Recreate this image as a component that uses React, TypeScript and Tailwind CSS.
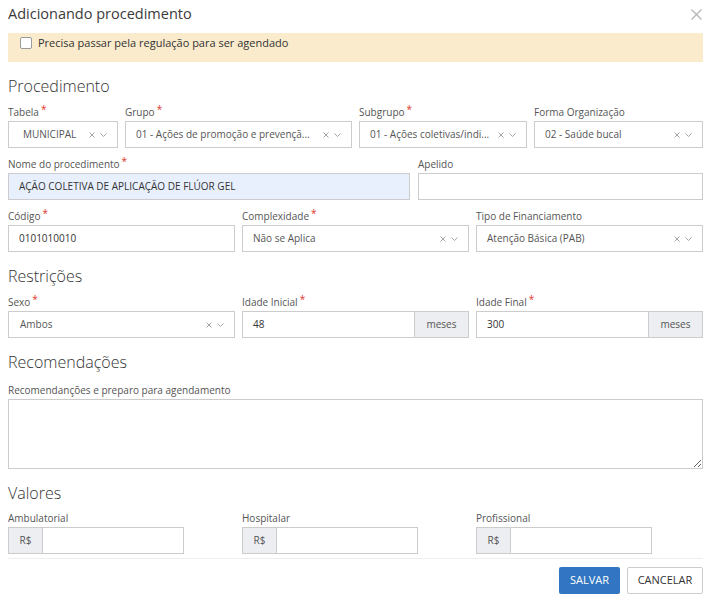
import React from 'react';

const font = "font-['Open_Sans',_sans-serif]";

function Req() {
  return <span className="ml-[2px] text-[#e0352b] text-[10px] leading-none relative -top-[3px]">*</span>;
}

function Label({ text, req }: { text: string; req?: boolean }) {
  return (
    <div className="text-[10px] leading-[14px] text-[#555] mb-[2px] whitespace-nowrap">
      {text}
      {req && <Req />}
    </div>
  );
}

function SelectIcons() {
  return (
    <div className="flex items-center gap-[5px] shrink-0">
      <svg width="6" height="6" viewBox="0 0 6 6">
        <path d="M0.5 0.5 L5.5 5.5 M5.5 0.5 L0.5 5.5" stroke="#9a9a9a" strokeWidth="0.9" fill="none" />
      </svg>
      <svg width="7" height="4" viewBox="0 0 7 4">
        <path d="M0.5 0.5 L3.5 3.5 L6.5 0.5" stroke="#9a9a9a" strokeWidth="0.9" fill="none" />
      </svg>
    </div>
  );
}

function Select({ value, pl = 'pl-[10px]' }: { value: string; pl?: string }) {
  return (
    <div className={`h-[27px] border border-[#ccc] bg-white flex items-center justify-between ${pl} pr-[10px]`}>
      <span className="whitespace-nowrap text-[10px] text-[#555]">{value}</span>
      <SelectIcons />
    </div>
  );
}

function Input({ value, bg = 'bg-white' }: { value?: string; bg?: string }) {
  return (
    <div className={`h-[27px] border border-[#ccc] ${bg} flex items-center pl-[10px] text-[10px] text-[#333]`}>
      {value}
    </div>
  );
}

function Addon({ value, addon }: { value: string; addon: string }) {
  return (
    <div className="h-[27px] border border-[#ccc] bg-white flex text-[10px]">
      <div className="flex-1 flex items-center pl-[10px] text-[#333]">{value}</div>
      <div className="w-[54px] border-l border-[#ccc] bg-[#eceef1] flex items-center justify-center text-[#555]">{addon}</div>
    </div>
  );
}

function Money() {
  return (
    <div className="w-[176px] h-[27px] border border-[#ccc] bg-white flex text-[10px]">
      <div className="w-[34px] border-r border-[#ccc] bg-[#eceef1] flex items-center justify-center text-[#555]">R$</div>
      <div className="flex-1" />
    </div>
  );
}

function Heading({ text, mb = 'mb-[7px]' }: { text: string; mb?: string }) {
  return <h3 className={`text-[16px] leading-[24px] font-light text-[#333] mt-[12px] ${mb}`}>{text}</h3>;
}

export default function App() {
  return (
    <div className={`${font} w-[710px] h-[602px] bg-white overflow-hidden pl-2 pr-[7px]`}>
      <div className="h-[33px] pt-[4px] flex justify-between items-start">
        <span className="text-[14.5px] leading-[20px] text-[#3a3a3a]">Adicionando procedimento</span>
        <svg width="11" height="11" viewBox="0 0 11 11" className="mt-[5px] mr-[1px]">
          <path d="M0.5 0.5 L10.5 10.5 M10.5 0.5 L0.5 10.5" stroke="#b5b5b5" strokeWidth="1.3" fill="none" />
        </svg>
      </div>

      <div className="h-[29px] bg-[#faebcc] flex items-start pl-[12px] pt-[3px] gap-[6px]">
        <div className="w-[12px] h-[12px] mt-[1px] border border-[#9a9a9a] rounded-[2px] bg-white" />
        <span className="text-[11px] leading-[14px] text-[#333]">Precisa passar pela regulação para ser agendado</span>
      </div>

      <Heading text="Procedimento" />
      <div className="grid grid-cols-[110px_227px_168px_1fr] gap-x-[7px]">
        <div>
          <Label text="Tabela" req />
          <Select value="MUNICIPAL" pl="pl-[14px]" />
        </div>
        <div>
          <Label text="Grupo" req />
          <Select value="01 - Ações de promoção e prevençã..." />
        </div>
        <div>
          <Label text="Subgrupo" req />
          <Select value="01 - Ações coletivas/indi..." />
        </div>
        <div>
          <Label text="Forma Organização" />
          <Select value="02 - Saúde bucal" />
        </div>
      </div>

      <div className="grid grid-cols-[402px_1fr] gap-x-[8px] mt-[9px]">
        <div>
          <Label text="Nome do procedimento" req />
          <Input value="AÇÃO COLETIVA DE APLICAÇÃO DE FLÚOR GEL" bg="bg-[#e8f0fe]" />
        </div>
        <div>
          <Label text="Apelido" />
          <Input />
        </div>
      </div>

      <div className="grid grid-cols-3 gap-x-[7px] mt-[9px]">
        <div>
          <Label text="Código" req />
          <Input value="0101010010" />
        </div>
        <div>
          <Label text="Complexidade" req />
          <Select value="Não se Aplica" />
        </div>
        <div>
          <Label text="Tipo de Financiamento" />
          <Select value="Atenção Básica (PAB)" />
        </div>
      </div>

      <Heading text="Restrições" />
      <div className="grid grid-cols-3 gap-x-[7px]">
        <div>
          <Label text="Sexo" req />
          <Select value="Ambos" pl="pl-[11px]" />
        </div>
        <div>
          <Label text="Idade Inicial" req />
          <Addon value="48" addon="meses" />
        </div>
        <div>
          <Label text="Idade Final" req />
          <Addon value="300" addon="meses" />
        </div>
      </div>

      <Heading text="Recomendações" mb="mb-[9px]" />
      <Label text="Recomendanções e preparo para agendamento" />
      <textarea className="block w-full h-[70px] border border-[#ccc] bg-white outline-none" />

      <Heading text="Valores" mb="mb-[6px]" />
      <div className="grid grid-cols-3 gap-x-[7px]">
        <div>
          <Label text="Ambulatorial" />
          <Money />
        </div>
        <div>
          <Label text="Hospitalar" />
          <Money />
        </div>
        <div>
          <Label text="Profissional" />
          <Money />
        </div>
      </div>

      <div className="mt-[4px] border-t border-[#eee] pt-[8px] flex justify-end gap-[7px]">
        <button className="h-[27px] bg-[#3276c3] text-white text-[11px] rounded-[2px] w-[61px]">SALVAR</button>
        <button className="h-[27px] bg-white border border-[#ccc] text-[#333] text-[11px] rounded-[2px] w-[76px]">CANCELAR</button>
      </div>
    </div>
  );
}
